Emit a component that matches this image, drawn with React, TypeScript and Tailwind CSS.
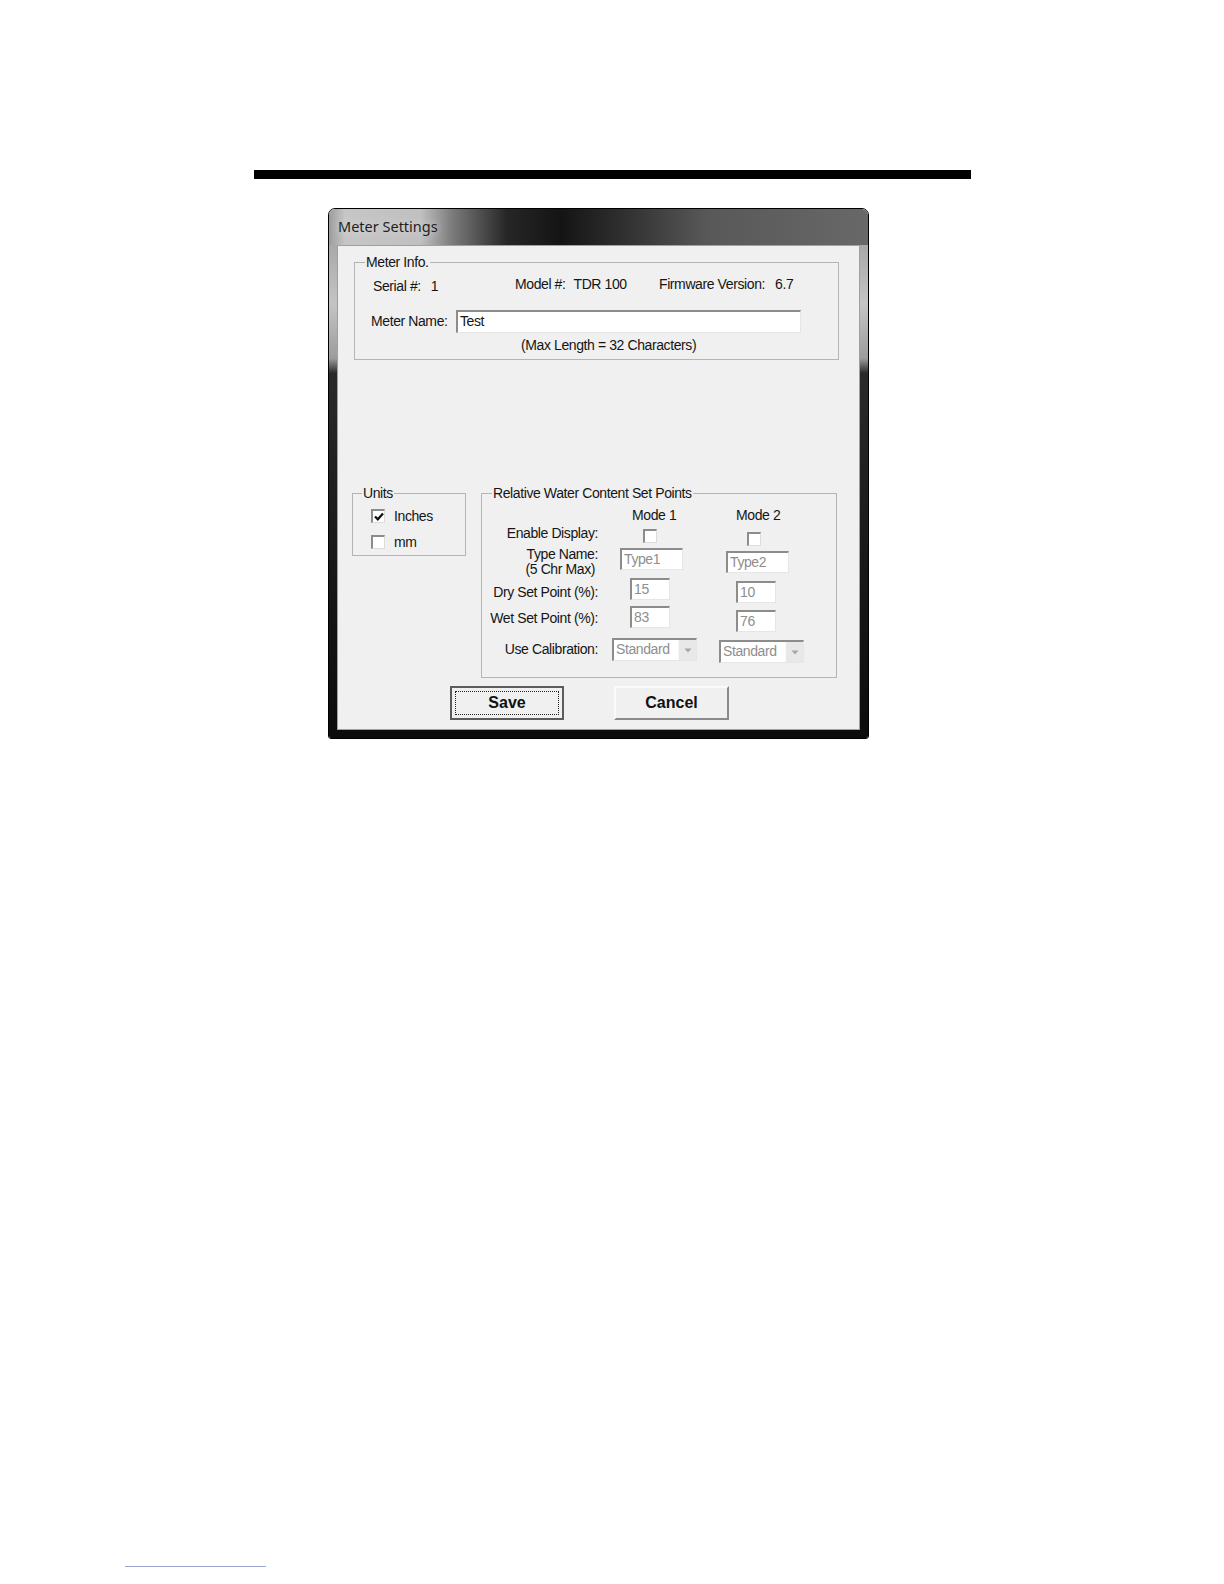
const ui = "font-['Liberation_Sans',Arial,sans-serif] text-[14px] tracking-[-0.4px] text-[#151515]";

function Box({ value, className }: { value: string; className: string }) {
  return (
    <div
      className={
        "h-[22px] bg-white border-t-2 border-l-2 border-t-[#8c8c8c] border-l-[#8c8c8c] border-r border-b border-r-[#e6e6e6] border-b-[#e6e6e6] pl-[2px] leading-[18px] text-[#8e8e8e] " +
        className
      }
    >
      {value}
    </div>
  );
}

function Check({ checked, className }: { checked?: boolean; className: string }) {
  return (
    <div
      className={
        "w-[14px] h-[14px] bg-white border-t-2 border-l-2 border-t-[#8c8c8c] border-l-[#8c8c8c] border-r border-b border-r-[#dcdcdc] border-b-[#dcdcdc] flex items-center justify-center " +
        className
      }
    >
      {checked && (
        <svg width="10" height="9" viewBox="0 0 10 9">
          <path d="M1 4.5 L3.8 7.3 L9 1.5" fill="none" stroke="#111" strokeWidth="2.3" />
        </svg>
      )}
    </div>
  );
}

function Combo({ className }: { className: string }) {
  return (
    <div
      className={
        "w-[85px] h-[23px] flex bg-white border-t-2 border-l-2 border-t-[#8c8c8c] border-l-[#8c8c8c] border-r border-b border-r-[#e6e6e6] border-b-[#e6e6e6] " +
        className
      }
    >
      <div className="flex-1 pl-[2px] leading-[19px] text-[#8e8e8e]">Standard</div>
      <div className="w-[18px] bg-[#e8e8e8] border-l border-[#f8f8f8] flex items-center justify-center">
        <svg width="8" height="5" viewBox="0 0 8 5">
          <path d="M0.5 0.5 H7.5 L4 4.5 Z" fill="#a6a6a6" />
        </svg>
      </div>
    </div>
  );
}

export default function App() {
  return (
    <div className="w-[1224px] h-[1584px] bg-white flex flex-col">
      <div className="mt-[170px] ml-[254px] w-[717px] h-[9px] bg-black" />

      {/* Meter Settings dialog */}
      <div className="mt-[29px] ml-[328px] w-[541px] border border-black rounded-t-[7px] rounded-b-[3px] overflow-hidden">
        <div className="h-[36px] flex items-center pl-[9px] bg-[linear-gradient(90deg,#9c9c9c_0%,#c6c6c6_3%,#c0c0c0_17%,#7a7a7a_23%,#262626_33%,#141414_43%,#333333_56%,#585858_70%,#686868_100%)]">
          <span className="font-['Noto_Sans','Open_Sans',sans-serif] text-[14.5px] text-[#1e1e1e] [text-shadow:0_0_8px_#e0e0e0]">
            Meter Settings
          </span>
        </div>
        <div className="px-[8px] pb-[8px] bg-[linear-gradient(180deg,#a8a8a8_0%,#c4c4c4_12%,#9c9c9c_23%,#2a2a2a_26%,#1a1a1a_60%,#0c0c0c_100%)]">
          <div className={"h-[485px] border border-[#a0a0a0] bg-[#f0f0f0] flex flex-col " + ui}>
            {/* Meter Info */}
            <fieldset className="mt-[8px] ml-[16px] w-[485px] border border-[#b4b4b4]">
              <legend className="ml-[10px] px-[1px] leading-[16px]">Meter Info.</legend>
              <div className="flex mt-[7px] ml-[18px] leading-[16px]">
                <div className="w-[142px] mt-[1px]">
                  Serial #:<span className="ml-[10px]">1</span>
                </div>
                <div className="w-[144px] -mt-[1px]">
                  Model #:<span className="ml-[8px]">TDR 100</span>
                </div>
                <div className="-mt-[1px]">
                  Firmware Version:<span className="ml-[10px]">6.7</span>
                </div>
              </div>
              <div className="flex items-center mt-[16px] ml-[16px]">
                <div className="w-[85px]">Meter Name:</div>
                <div className="w-[345px] h-[23px] bg-white border-t-2 border-l-2 border-t-[#8c8c8c] border-l-[#8c8c8c] border-r border-b border-r-[#e6e6e6] border-b-[#e6e6e6] pl-[2px] leading-[19px]">
                  Test
                </div>
              </div>
              <div className="mt-[4px] mb-[6px] ml-[166px] leading-[16px]">(Max Length = 32 Characters)</div>
            </fieldset>

            <div className="flex items-start mt-[125px]">
              {/* Units */}
              <fieldset className="ml-[14px] w-[114px] border border-[#b4b4b4]">
                <legend className="ml-[9px] px-[1px] leading-[16px]">Units</legend>
                <div className="flex items-center mt-[8px] ml-[18px]">
                  <Check checked className="" />
                  <span className="ml-[9px] leading-[14px]">Inches</span>
                </div>
                <div className="flex items-center mt-[12px] mb-[6px] ml-[18px]">
                  <Check className="" />
                  <span className="ml-[9px] leading-[14px]">mm</span>
                </div>
              </fieldset>

              {/* Relative Water Content Set Points */}
              <fieldset className="ml-[15px] w-[356px] border border-[#b4b4b4] pb-[9px]">
                <legend className="ml-[10px] px-[1px] leading-[16px]">Relative Water Content Set Points</legend>
                <div className="flex h-[24px]">
                  <div className="w-[116px]" />
                  <div className="w-[102px]">
                    <div className="ml-[34px] mt-[6px] leading-[16px]">Mode 1</div>
                  </div>
                  <div>
                    <div className="ml-[36px] mt-[6px] leading-[16px]">Mode 2</div>
                  </div>
                </div>
                <div className="flex h-[22px]">
                  <div className="w-[116px] text-right leading-[16px]">Enable Display:</div>
                  <div className="w-[102px]">
                    <Check className="ml-[45px] mt-[4px]" />
                  </div>
                  <div>
                    <Check className="ml-[47px] mt-[7px]" />
                  </div>
                </div>
                <div className="flex h-[29px]">
                  <div className="w-[116px] text-right leading-[15px]">
                    <div>Type Name:</div>
                    <div className="pr-[3px]">(5 Chr Max)</div>
                  </div>
                  <div className="w-[102px]">
                    <Box value="Type1" className="ml-[22px] mt-[1px] w-[63px]" />
                  </div>
                  <div>
                    <Box value="Type2" className="ml-[26px] mt-[4px] w-[63px]" />
                  </div>
                </div>
                <div className="flex h-[28px]">
                  <div className="w-[116px] text-right leading-[16px] mt-[8px]">Dry Set Point (%):</div>
                  <div className="w-[102px]">
                    <Box value="15" className="ml-[32px] mt-[2px] w-[40px]" />
                  </div>
                  <div>
                    <Box value="10" className="ml-[36px] mt-[5px] w-[40px]" />
                  </div>
                </div>
                <div className="flex h-[30px]">
                  <div className="w-[116px] text-right leading-[16px] mt-[6px]">Wet Set Point (%):</div>
                  <div className="w-[102px]">
                    <Box value="83" className="ml-[32px] mt-[2px] w-[40px]" />
                  </div>
                  <div>
                    <Box value="76" className="ml-[36px] mt-[6px] w-[40px]" />
                  </div>
                </div>
                <div className="flex h-[34px]">
                  <div className="w-[116px] text-right leading-[16px] mt-[7px]">Use Calibration:</div>
                  <div className="w-[102px]">
                    <Combo className="ml-[14px] mt-[4px]" />
                  </div>
                  <div>
                    <Combo className="ml-[19px] mt-[6px]" />
                  </div>
                </div>
              </fieldset>
            </div>

            {/* buttons */}
            <div className="flex mt-[8px] ml-[112px] font-bold text-[16px] tracking-normal text-[#111]">
              <button className="w-[114px] h-[34px] border-2 border-[#5c5c5c] bg-[#f0f0f0] p-[3px]">
                <div className="h-full border border-dotted border-[#222] flex items-center justify-center">Save</div>
              </button>
              <button className="ml-[50px] w-[115px] h-[34px] border-2 border-t-[#fafafa] border-l-[#fafafa] border-r-[#8a8a8a] border-b-[#8a8a8a] bg-[#f0f0f0] flex items-center justify-center">
                Cancel
              </button>
            </div>
          </div>
        </div>
      </div>

      <div className="mt-auto mb-[17px] ml-[125px] w-[141px] h-px bg-[#9da6d0]" />
    </div>
  );
}
